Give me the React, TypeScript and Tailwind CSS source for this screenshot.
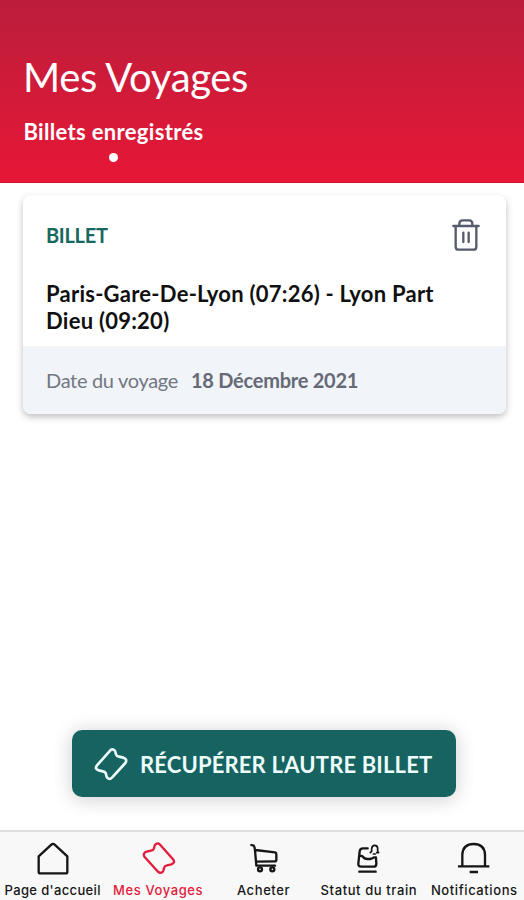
import type { ReactNode } from "react";

function TicketIcon({ className }: { className: string }) {
  return (
    <svg viewBox="0 0 102 102" className={className} fill="none" stroke="currentColor" strokeLinejoin="round">
      <path d="M9 55 L49 10 Q54 5 60 9 Q64 11 65 17 L66 22 Q68 28 75 29 L88 32 Q94 34 96 38 Q98 43 94 48 L54 92 Q48 98 42 94 Q38 92 37 86 L36 81 Q34 74 27 73 L14 70 Q8 68 6 64 Q5 60 9 55Z" />
    </svg>
  );
}

function TrashIcon() {
  return (
    <svg viewBox="0 0 84 96" className="h-8 w-7 text-[#555b6c]" fill="none" stroke="currentColor" strokeWidth="7" strokeLinecap="round" strokeLinejoin="round">
      <path d="M4 21H80M11 21V83Q11 92 20 92H64Q73 92 73 83V21M22 20V14Q22 4 32 4H51Q61 4 61 14V20" />
      <path d="M34 41V69M50 41V69" />
    </svg>
  );
}

function HomeIcon() {
  return (
    <svg viewBox="0 0 102 102" className="size-[34px]" fill="none" stroke="currentColor" strokeWidth="7" strokeLinejoin="round">
      <path d="M8 46 L46 11 Q51 6 56 11 L94 46 V92 Q94 97 89 97 H13 Q8 97 8 92Z" />
    </svg>
  );
}

function CartIcon() {
  return (
    <svg viewBox="0 0 102 102" className="size-[34px]" fill="none" stroke="currentColor" strokeWidth="7" strokeLinecap="round" strokeLinejoin="round">
      <path d="M13 12 L20 14 Q23 17 24 28 L28 74 H84 M25 27 L84 34 Q88 35 88 40 V56 Q88 61 83 61 L28 62" />
      <circle cx="39" cy="85" r="6" />
      <circle cx="76" cy="85" r="6" />
    </svg>
  );
}

function TrainStatusIcon() {
  return (
    <svg viewBox="0 0 102 102" className="size-[34px]" fill="none" stroke="currentColor" strokeWidth="7" strokeLinecap="round" strokeLinejoin="round">
      <path d="M47 22H33Q24 22 23 31L19 68Q18 77 28 77H64Q73 77 73 68L72 52M22 43L32 46Q37 54 46 54H54Q63 52 66 49L72 49M22 92H71" />
      <path d="M55 35L59 31V23Q60 13 68 13Q77 13 77 23V31L80 35H74 M64 39H70" strokeWidth="5" />
    </svg>
  );
}

function BellIcon() {
  return (
    <svg viewBox="0 0 102 102" className="size-[34px]" fill="none" stroke="currentColor" strokeWidth="7">
      <path d="M3 76H97M16 75V41C17 19 31 9 50 9S83 19 84 41V75M38 93H63" />
    </svg>
  );
}

interface TabProps {
  label: string;
  icon: ReactNode;
  tracking: string;
  active?: boolean;
}

function Tab({ label, icon, tracking, active = false }: TabProps) {
  return (
    <button className={`flex flex-1 basis-0 flex-col items-center pt-[9px] ${active ? "text-[#e31b3b]" : "text-[#161616]"}`}>
      {icon}
      <span className={`mt-1.5 whitespace-nowrap font-[Inter,sans-serif] text-[13px] leading-[18px] font-medium ${tracking}`}>{label}</span>
    </button>
  );
}

export default function App() {
  return (
    <div className="flex h-[900px] w-[524px] flex-col overflow-hidden bg-white font-[Lato,sans-serif]">
      <header className="h-[183px] shrink-0 border-b border-[#d5102d] bg-linear-to-b from-[#bb1d3b] to-[#e71636] px-[23px] pt-[53px] text-white">
        <h1 className="text-[40px] leading-[48px] tracking-[-0.35px]">Mes Voyages</h1>
        <div className="mt-4 flex w-[181px] flex-col items-center">
          <span className="whitespace-nowrap text-[22px] leading-[30px] font-bold tracking-[0.33px]">Billets enregistrés</span>
          <span className="mt-[6px] size-[9px] rounded-full bg-white" />
        </div>
      </header>

      <main className="flex flex-1 flex-col px-[23px] pt-3">
        <article className="-mr-[5px] h-[219px] w-[483px] overflow-hidden rounded-lg bg-white shadow-[0_3px_7px_rgba(0,0,0,0.25)]">
          <div className="h-[151px] px-[23px] pt-6">
            <div className="flex items-start justify-between">
              <span className="mt-px text-[20px] leading-[30px] font-bold tracking-[-0.3px] text-[#17685f]">BILLET</span>
              <button aria-label="Supprimer" className="mr-[3px]">
                <TrashIcon />
              </button>
            </div>
            <h2 className="mt-[29px] text-[22px] leading-[27px] font-bold tracking-[0.25px] whitespace-nowrap text-[#101010]">
              Paris-Gare-De-Lyon (07:26) - Lyon Part
              <br />
              Dieu (09:20)
            </h2>
          </div>
          <div className="flex h-[68px] items-center gap-[13px] bg-[#f1f4f8] px-[23px] text-[20px] text-[#737782]">
            <span className="tracking-[-0.32px]">Date du voyage</span>
            <span className="font-bold tracking-[-0.25px] text-[#666a76]">18 Décembre 2021</span>
          </div>
        </article>

        <button className="mt-auto mb-[33px] ml-[49px] flex h-[67px] w-[384px] items-center rounded-[10px] bg-[#166361] pl-[22px] text-[#edfcfb] shadow-[0_2px_20px_rgba(0,0,0,0.2)]">
          <TicketIcon className="size-[34px] stroke-[8]" />
          <span className="mt-0.5 ml-3 whitespace-nowrap text-[22px] font-bold tracking-[0.15px]">RÉCUPÉRER L'AUTRE BILLET</span>
        </button>
      </main>

      <nav className="-mr-[3px] flex h-[70px] shrink-0 border-t-2 border-[#dedede] bg-[#f8f8f8]">
        <Tab label="Page d'accueil" tracking="tracking-[0.35px]" icon={<HomeIcon />} />
        <Tab label="Mes Voyages" tracking="tracking-[0.6px]" active icon={<TicketIcon className="ml-px size-[34px] -scale-x-100 stroke-[7]" />} />
        <Tab label="Acheter" tracking="tracking-[0.6px]" icon={<CartIcon />} />
        <Tab label="Statut du train" tracking="tracking-[0.6px]" icon={<TrainStatusIcon />} />
        <Tab label="Notifications" tracking="tracking-[0.6px]" icon={<BellIcon />} />
      </nav>
    </div>
  );
}
